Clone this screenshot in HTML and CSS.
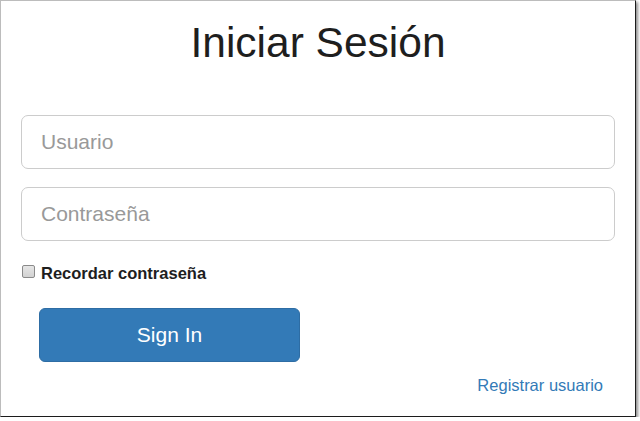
FILE: index.html
```html
<!DOCTYPE html>
<html lang="es">
<head>
<meta charset="utf-8">
<title>Iniciar Sesión</title>
<link rel="stylesheet" href="styles.css">
</head>
<body>
<div class="frame">
  <h1 class="title">Iniciar Sesión</h1>
  <form class="login">
    <input class="field field-first" type="text" placeholder="Usuario">
    <input class="field field-second" type="password" placeholder="Contraseña">
    <label class="remember"><input class="check" type="checkbox"><span>Recordar contraseña</span></label>
    <button class="btn" type="button">Sign In</button>
    <div class="register"><a href="#" class="link">Registrar usuario</a></div>
  </form>
</div>
</body>
</html>
```
FILE: styles.css
```css
html, body {
  margin: 0;
  padding: 0;
  background: #ffffff;
  overflow: hidden;
}
body {
  font-family: "Liberation Sans", Arial, sans-serif;
  color: #222;
}
.frame {
  box-sizing: border-box;
  width: 636px;
  height: 417px;
  background: #fff;
  border-left: 1px solid #bcbcbc;
  border-top: 1px solid #bcbcbc;
  border-right: 1px solid #1c1c1c;
  border-bottom: 1px solid #1c1c1c;
  box-shadow: 2px 2px 3px rgba(0, 0, 0, 0.45);
  padding: 19px 20px 0 20px;
  display: flex;
  flex-direction: column;
}
.title {
  margin: 0;
  font-weight: normal;
  font-size: 42.5px;
  line-height: 46.75px;
  text-align: center;
  color: #1e1e1e;
}
.login {
  display: flex;
  flex-direction: column;
  margin-top: 48px;
}
.field {
  box-sizing: border-box;
  width: 100%;
  height: 54px;
  margin: 0;
  padding: 0 19px;
  border: 1px solid #cccccc;
  border-radius: 7px;
  font-family: "Liberation Sans", Arial, sans-serif;
  font-size: 21px;
  color: #555;
  background: #fff;
  outline: none;
}
.field::placeholder {
  color: #999;
}
.field-second {
  margin-top: 18px;
}
.remember {
  display: flex;
  align-items: flex-start;
  margin-top: 22px;
  height: 20px;
  line-height: 20px;
  font-size: 16.5px;
  font-weight: bold;
  color: #1e1e1e;
}
.check {
  appearance: none;
  -webkit-appearance: none;
  box-sizing: border-box;
  width: 13px;
  height: 13px;
  margin: 2px 6px 0 1px;
  border: 1px solid #8a8a8a;
  border-radius: 2px;
  background: linear-gradient(#e6e6e6, #d2d2d2);
}
.btn {
  box-sizing: border-box;
  align-self: flex-start;
  margin: 25px 0 0 18px;
  width: 261px;
  height: 54px;
  border: 1px solid #2e6da4;
  border-radius: 6px;
  background: #337ab7;
  color: #fff;
  font-family: "Liberation Sans", Arial, sans-serif;
  font-size: 21px;
  padding: 0;
}
.register {
  margin-top: 13px;
  text-align: right;
  padding-right: 12px;
  line-height: 20px;
  font-size: 16.5px;
}
.link {
  color: #337ab7;
  text-decoration: none;
}
```
